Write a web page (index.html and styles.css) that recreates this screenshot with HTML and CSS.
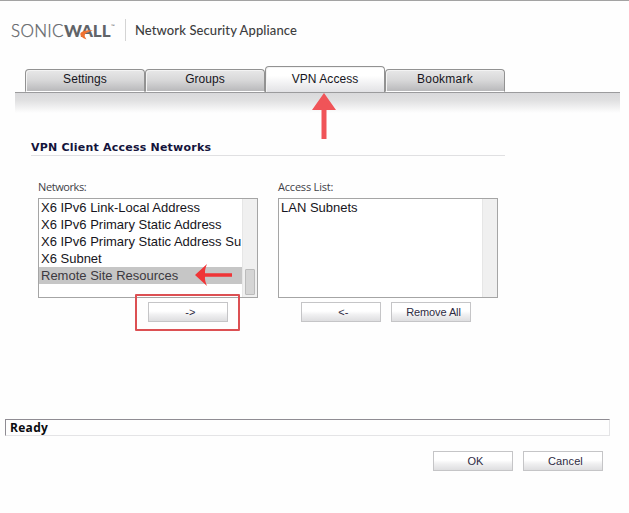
FILE: index.html
```html
<!DOCTYPE html>
<html lang="en">
<head>
<meta charset="utf-8">
<title>Network Security Appliance</title>
<link rel="stylesheet" href="styles.css">
</head>
<body>
<header class="brand">
  <div class="logo"><span class="sonic">SONIC</span><span class="wall">WALL</span>
    <svg class="swoosh" width="14" height="12" viewBox="0 0 14 12"><path d="M13 1.500C8 .5 1 2 .3 4.800 0 7 2 9 6.500 10.500 5 8 4 6.500 5 5.200 6.500 3.200 9 2.500 13 1.500z" fill="#f0712f"/></svg>
    <span class="tm">™</span></div>
  <div class="product">Network Security Appliance</div>
</header>
<nav class="tabs">
  <div class="tab"><span>Settings</span></div>
  <div class="tab"><span>Groups</span></div>
  <div class="tab active"><span>VPN Access</span></div>
  <div class="tab"><span class="wide">Bookmark</span></div>
</nav>
<div class="shade">
  <svg class="up-arrow" width="26" height="47" viewBox="0 0 26 47"><path d="M13 0L25 17H15.500V46H10.500V17H1z" fill="#f05458"/></svg>
</div>
<main>
  <h1><span>VPN Client Access Networks</span></h1>
  <div class="columns">
    <section class="column">
      <div class="label"><span class="tight">Networks:</span></div>
      <div class="list">
        <div class="items">
          <div class="item"><span>X6 IPv6 Link-Local Address</span></div>
          <div class="item"><span>X6 IPv6 Primary Static Address</span></div>
          <div class="item"><span>X6 IPv6 Primary Static Address Su</span></div>
          <div class="item"><span>X6 Subnet</span></div>
          <div class="item selected"><span>Remote Site Resources</span>
            <svg class="left-arrow" width="38" height="24" viewBox="0 0 38 24"><path d="M0 12L12 1Q9.500 7 10 10.200H37V13.800H10Q9.500 17 12 23z" fill="#f03537"/></svg></div>
        </div>
        <div class="track"><div class="thumb"></div></div>
      </div>
      <div class="actions add"><button><span class="sym">-&gt;</span></button><div class="highlight"></div></div>
    </section>
    <section class="column">
      <div class="label"><span>Access List:</span></div>
      <div class="list">
        <div class="items"><div class="item"><span>LAN Subnets</span></div></div>
        <div class="track"></div>
      </div>
      <div class="actions remove"><button><span class="sym">&lt;-</span></button><button><span class="remove-all">Remove All</span></button></div>
    </section>
  </div>
</main>
<div class="status"><span>Ready</span></div>
<footer><button><span>OK</span></button><button><span>Cancel</span></button></footer>
</body>
</html>
```
FILE: styles.css
```css
* { box-sizing: border-box; }
body {
  margin: 0;
  width: 629px;
  height: 513px;
  overflow: hidden;
  background: #fefefe;
  border-top: 1px solid #a3a3a3;
  font-family: "Liberation Sans", sans-serif;
  color: #161521;
}
span { white-space: nowrap; }
.brand { display: flex; height: 65px; padding: 18px 0 0 11px; }
.logo {
  position: relative;
  display: flex;
  width: 115px;
  height: 22px;
  border-right: 1px solid #d4d4d4;
  font: 17px/23px Lato, sans-serif;
  color: #616468;
}
.sonic { width: 53px; font-weight: 300; letter-spacing: .3px; -webkit-text-stroke: .25px #616468; }
.wall { font-weight: 900; letter-spacing: -.1px; }
.swoosh { position: absolute; left: 69px; top: 10px; }
.tm { position: absolute; left: 100px; top: 4px; font-size: 5px; line-height: 6px; }
.product {
  margin-left: 9px;
  font: 500 13px/22px Lato, sans-serif;
  letter-spacing: .1px;
  color: #3d3d40;
}
.tabs { display: flex; align-items: flex-end; height: 26px; padding-left: 25px; }
.tab {
  width: 120px;
  height: 23px;
  border: 1px solid #929292;
  border-bottom-color: #fff;
  border-radius: 4px 4px 0 0;
  background: linear-gradient(#e8e8e8, #d7d7d8 50%, #b9b9bb);
  box-shadow: inset 1px 1px 0 #f3f3f3;
  font-size: 12px;
  line-height: 18px;
  text-align: center;
  letter-spacing: .05px;
}
.wide { letter-spacing: .25px; }
.tab.active {
  height: 26px;
  border-bottom: 0;
  background: linear-gradient(#fff 35%, #e2e2e5);
  line-height: 24px;
}
.shade {
  position: relative;
  width: 605px;
  height: 22px;
  margin-left: 15px;
  border-top: 1px solid #9b9b9d;
  background: linear-gradient(#d9d9db, #e0e0e1 35%, #fefefe 95%);
}
.up-arrow { position: absolute; left: 296px; top: 0; }
h1 {
  width: 474px;
  height: 16px;
  margin: 26px 0 0 31px;
  border-bottom: 1px solid #e0e0e2;
  font: bold 11px/16px "DejaVu Sans", sans-serif;
  letter-spacing: .22px;
  color: #14143c;
}
.columns { display: flex; gap: 20px; padding: 24px 0 0 38px; }
.column { width: 220px; }
.label { height: 18px; font: 11px/14px "Open Sans", sans-serif; letter-spacing: -.2px; color: #414147; }
.tight { letter-spacing: -.4px; }
.list { display: flex; height: 100px; border: 1px solid #a5a5a5; background: #fff; }
.items { width: 203px; }
.item {
  position: relative;
  height: 17px;
  padding-left: 2px;
  overflow: hidden;
  font-size: 13px;
  line-height: 18px;
}
.selected { overflow: visible; background: #c6c6c6; color: #3c3940; }
.left-arrow { position: absolute; left: 156px; top: -4px; }
.track { width: 15px; background: #f0f0f0; border-left: 1px solid #e6e6e6; padding: 70px 2px 2px; }
.thumb { width: 10px; height: 26px; border: 1px solid #bbb; border-radius: 1px; background: #d5d5d5; }
.actions { position: relative; display: flex; gap: 10px; padding-top: 4px; }
.add { padding-left: 110px; }
.remove { padding-left: 23px; }
button {
  width: 80px;
  height: 20px;
  padding: 0 0 0 5px;
  border: 1px solid #c5c5c7;
  background: linear-gradient(#fff 45%, #f0f0f1 65%, #dedee0);
  font: 11px/18px "Liberation Sans", sans-serif;
  letter-spacing: .1px;
  color: #2e2b42;
}
.remove-all { letter-spacing: -.1px; }
.highlight { position: absolute; left: 97px; top: -4px; width: 105px; height: 37px; border: 2px solid #dc5053; border-radius: 1px; }
.status {
  width: 605px;
  height: 17px;
  margin: 97px 0 0 5px;
  border: 1px solid #e4e4e6;
  border-top-color: #8f8c93;
  border-left-color: #8f8c93;
  padding-left: 4px;
  font: bold 12px/16px "Open Sans", sans-serif;
  letter-spacing: .3px;
  color: #0b0b0f;
}
footer { display: flex; gap: 10px; padding: 15px 0 0 433px; }
```
